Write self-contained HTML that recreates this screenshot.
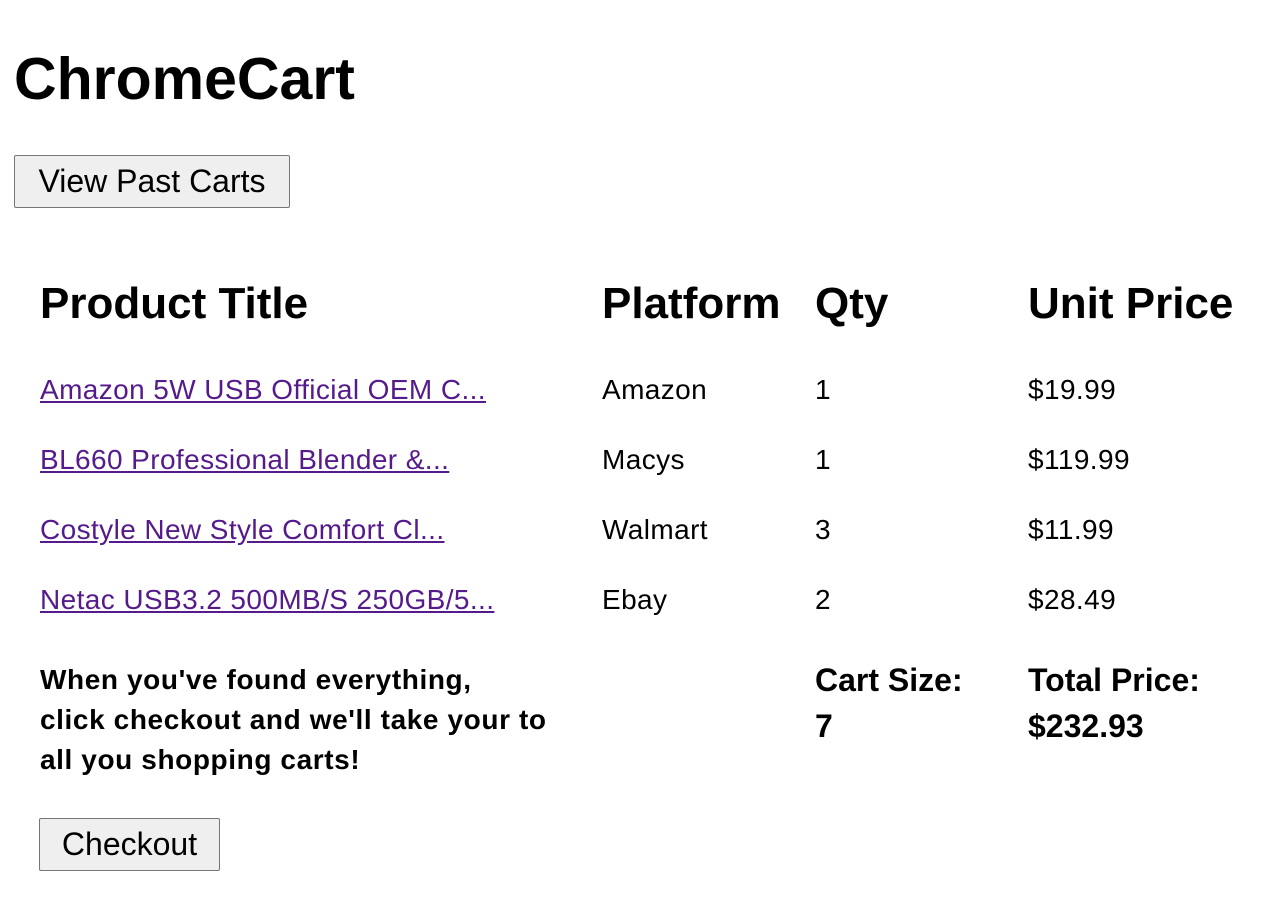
<!DOCTYPE html>
<html><head><meta charset="utf-8"><style>
body{margin:0;width:1276px;height:908px;background:#fff;font-family:"Liberation Sans",Arial,sans-serif;color:#000;position:relative;overflow:hidden}
.a{position:absolute;white-space:nowrap}
h1{position:absolute;left:14px;top:44px;margin:0;font-size:59px;font-weight:bold;line-height:70px}
.btn{position:absolute;background:#efefef;border:1px solid #767676;border-radius:2px;font-size:32px;font-family:"Liberation Sans",Arial,sans-serif;display:flex;align-items:center;justify-content:center;box-sizing:border-box}
.th{font-size:44px;font-weight:bold;top:279px;line-height:50px}
.td{font-size:28px;line-height:34px;letter-spacing:0.4px}
a{color:#551a8b;text-decoration:underline}
.ft{font-size:28px;font-weight:bold;line-height:40px;letter-spacing:0.6px}
.ft2{font-size:32px;font-weight:bold;line-height:46px}
</style></head><body>
<h1>ChromeCart</h1>
<div class="btn" style="left:14px;top:155px;width:276px;height:53px">View Past Carts</div>
<div class="a th" style="left:40px">Product Title</div>
<div class="a th" style="left:602px">Platform</div>
<div class="a th" style="left:815px">Qty</div>
<div class="a th" style="left:1028px">Unit Price</div>

<div class="a td" style="left:40px;top:373px"><a>Amazon 5W USB Official OEM C...</a></div>
<div class="a td" style="left:602px;top:373px">Amazon</div>
<div class="a td" style="left:815px;top:373px">1</div>
<div class="a td" style="left:1028px;top:373px">$19.99</div>

<div class="a td" style="left:40px;top:443px"><a>BL660 Professional Blender &amp;...</a></div>
<div class="a td" style="left:602px;top:443px">Macys</div>
<div class="a td" style="left:815px;top:443px">1</div>
<div class="a td" style="left:1028px;top:443px">$119.99</div>

<div class="a td" style="left:40px;top:513px"><a>Costyle New Style Comfort Cl...</a></div>
<div class="a td" style="left:602px;top:513px">Walmart</div>
<div class="a td" style="left:815px;top:513px">3</div>
<div class="a td" style="left:1028px;top:513px">$11.99</div>

<div class="a td" style="left:40px;top:583px"><a>Netac USB3.2 500MB/S 250GB/5...</a></div>
<div class="a td" style="left:602px;top:583px">Ebay</div>
<div class="a td" style="left:815px;top:583px">2</div>
<div class="a td" style="left:1028px;top:583px">$28.49</div>

<div class="a ft" style="left:40px;top:660px">When you've found everything,<br>click checkout and we'll take your to<br>all you shopping carts!</div>
<div class="a ft2" style="left:815px;top:657px">Cart Size:<br>7</div>
<div class="a ft2" style="left:1028px;top:657px">Total Price:<br>$232.93</div>

<div class="btn" style="left:39px;top:818px;width:181px;height:53px">Checkout</div>
</body></html>
